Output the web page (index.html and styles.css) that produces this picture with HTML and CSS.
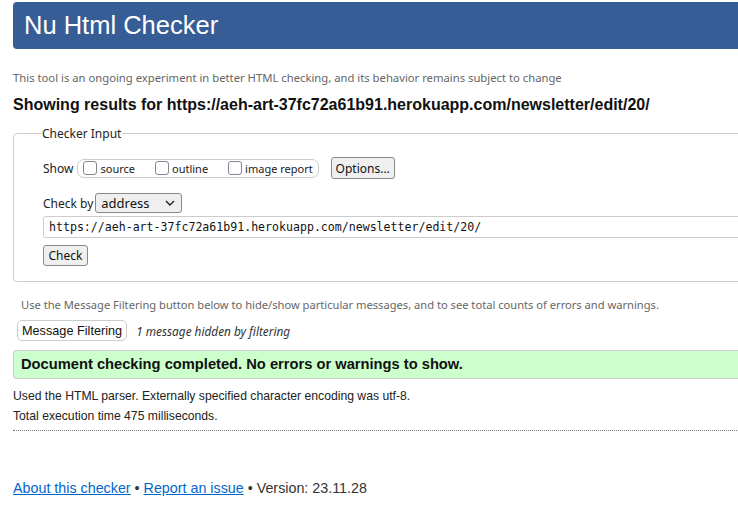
FILE: index.html
```html
<!DOCTYPE html>
<html lang="en">
<head>
<meta charset="utf-8">
<title>Nu Html Checker</title>
<link rel="stylesheet" href="styles.css">
</head>
<body>
<div class="page">
  <header class="banner"><h1>Nu Html Checker</h1></header>
  <p class="intro">This tool is an ongoing experiment in better HTML checking, and its behavior remains subject to change</p>
  <h2 class="results-title">Showing results for https://aeh-art-37fc72a61b91.herokuapp.com/newsletter/edit/20/</h2>

  <fieldset class="checker">
    <legend>Checker Input</legend>
    <div class="show-row">
      <span class="label">Show</span>
      <span class="checks">
        <label class="check"><span class="box"></span>source</label>
        <label class="check"><span class="box"></span>outline</label>
        <label class="check"><span class="box"></span>image report</label>
      </span>
      <button class="btn options">Options...</button>
    </div>
    <div class="by-row">
      <span class="label">Check by</span>
      <span class="select">address
        <svg class="chev" width="10" height="6" viewBox="0 0 10 6"><path d="M1 1l4 4 4-4" fill="none" stroke="#222" stroke-width="1.4"/></svg>
      </span>
    </div>
    <div class="url">https://aeh-art-37fc72a61b91.herokuapp.com/newsletter/edit/20/</div>
    <button class="btn check-btn">Check</button>
  </fieldset>

  <p class="filter-note">Use the Message Filtering button below to hide/show particular messages, and to see total counts of errors and warnings.</p>
  <div class="filter-row">
    <button class="btn filter-btn">Message Filtering</button>
    <em class="hidden-note">1 message hidden by filtering</em>
  </div>

  <div class="success">Document checking completed. No errors or warnings to show.</div>
  <p class="details">Used the HTML parser. Externally specified character encoding was utf-8.</p>
  <p class="details">Total execution time 475 milliseconds.</p>
  <hr class="sep">

  <footer class="footer">
    <a href="#">About this checker</a> &bull; <a href="#">Report an issue</a> &bull; Version: 23.11.28
  </footer>
</div>
</body>
</html>
```

FILE: styles.css
```css
html, body {
  margin: 0;
  padding: 0;
  background: #fff;
  overflow: hidden;
}
body {
  font-family: "Liberation Sans", Arial, sans-serif;
  color: #222;
}
.page {
  width: 760px;
  padding: 2px 0 0 13px;
}
.banner {
  background: #365d95;
  border-radius: 4px;
  height: 47px;
  display: flex;
  align-items: center;
}
.banner h1 {
  margin: 0 0 0 11px;
  font-weight: normal;
  font-size: 25.5px;
  color: #fff;
  line-height: 1;
}
.intro {
  margin: 21px 0 0;
  font-family: "Noto Sans", sans-serif;
  font-size: 11.27px;
  color: #666;
  line-height: 15px;
}
.results-title {
  margin: 10px 0 0;
  font-size: 16px;
  font-weight: bold;
  color: #111;
  line-height: 19px;
}
.checker {
  margin: 11px 0 0;
  border: 1px solid #ccc;
  border-radius: 4px;
  padding: 14px 0 15px 29px;
  font-family: "Noto Sans", sans-serif;
  font-size: 12px;
  color: #222;
}
.checker legend {
  margin-left: -2px;
  padding: 0 1px;
  font-size: 12px;
}
.show-row {
  display: flex;
  align-items: center;
  height: 24px;
}
.label { margin-right: 4px; }
.checks {
  display: flex;
  align-items: center;
  border: 1px solid #ccc;
  border-radius: 7px;
  height: 17px;
  padding: 0 5px 0 5px;
}
.check {
  display: flex;
  align-items: center;
  font-size: 11px;
  margin-right: 20px;
}
.check:last-child { margin-right: 0; }
.box {
  width: 14px;
  height: 14px;
  border: 1px solid #858597;
  border-radius: 3px;
  margin-right: 3px;
  box-sizing: border-box;
  background: #fff;
}
.btn {
  font-family: "Noto Sans", sans-serif;
  font-size: 12px;
  color: #111;
  background: #efefef;
  border: 1px solid #888;
  border-radius: 3px;
  padding: 0 5px;
  height: 22px;
}
.options { margin-left: 12px; width: 64px; padding: 0; }
.by-row {
  display: flex;
  align-items: center;
  margin-top: 13px;
  height: 20px;
}
.by-row .label { margin-right: 2px; }
.select {
  display: flex;
  align-items: center;
  justify-content: space-between;
  width: 87px;
  height: 20px;
  box-sizing: border-box;
  border: 1px solid #888;
  border-radius: 3px;
  background: #efefef;
  padding: 0 6px 0 5px;
  font-size: 13px;
  color: #111;
}
.url {
  margin-top: 3px;
  border: 1px solid #ccc;
  border-radius: 3px 0 0 3px;
  height: 20px;
  line-height: 20px;
  padding-left: 5px;
  font-family: "DejaVu Sans Mono", monospace;
  font-size: 11.58px;
  color: #111;
}
.check-btn {
  margin-top: 7px;
  height: 21px;
  width: 45px;
  padding: 0;
}
.filter-note {
  margin: 15px 0 0 8px;
  font-family: "Noto Sans", sans-serif;
  font-size: 11.15px;
  color: #666;
  line-height: 15px;
}
.filter-row {
  display: flex;
  align-items: center;
  margin: 8px 0 0 4px;
}
.filter-btn {
  font-family: "Liberation Sans", Arial, sans-serif;
  font-size: 12.7px;
  background: #fff;
  border: 1px solid #ccc;
  border-radius: 5px;
  height: 21px;
  padding: 0 4px;
}
.hidden-note {
  margin-left: 9px;
  font-family: "Noto Sans", sans-serif;
  font-size: 11.8px;
  color: #333;
}
.success {
  margin-top: 9px;
  background: #ccffcc;
  border: 1px solid #ccc;
  border-right: 0;
  border-radius: 4px 0 0 4px;
  height: 27px;
  line-height: 27px;
  padding-left: 7px;
  font-size: 14.7px;
  font-weight: bold;
  color: #111;
}
.details {
  margin: 10px 0 0;
  font-size: 12.2px;
  line-height: 14px;
  color: #222;
}
.details + .details { margin-top: 6px; }
.sep {
  margin: 7px 0 0;
  border: 0;
  border-top: 1px dotted #777;
  height: 0;
}
.footer {
  margin-top: 49px;
  font-size: 14.3px;
  color: #333;
}
.footer a {
  color: #0066cc;
}
```
